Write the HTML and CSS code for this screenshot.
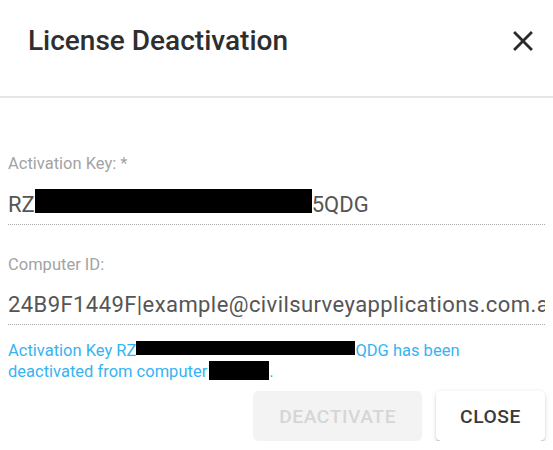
FILE: index.html
```html
<!DOCTYPE html>
<html lang="en">
<head>
<meta charset="utf-8">
<title>License Deactivation</title>
<link rel="stylesheet" href="styles.css">
</head>
<body>
<div class="dialog">
  <header class="dialog-header">
    <h1 class="dialog-title">License Deactivation</h1>
    <button class="icon-btn" aria-label="Close">
      <svg class="close-icon" viewBox="0 0 24 24" width="34" height="34"><path d="M19 6.41L17.59 5 12 10.59 6.41 5 5 6.41 10.59 12 5 17.59 6.41 19 12 13.41 17.59 19 19 17.59 13.41 12z" fill="#2b2b2b"/></svg>
    </button>
  </header>
  <div class="dialog-content">
    <div class="field">
      <label class="field-label">Activation Key: *</label>
      <div class="field-input">RZ<span class="redact redact-key"></span>5QDG</div>
    </div>
    <div class="field field-second">
      <label class="field-label">Computer ID:</label>
      <div class="field-input field-wide">24B9F1449F|example@civilsurveyapplications.com.au</div>
    </div>
    <p class="message">Activation Key RZ<span class="redact redact-msg1"></span>QDG has been<br>deactivated from computer <span class="redact redact-msg2"></span>.</p>
    <div class="actions">
      <button class="btn btn-disabled" disabled>Deactivate</button>
      <button class="btn btn-raised">Close</button>
    </div>
  </div>
</div>
</body>
</html>
```

FILE: styles.css
```css
* { box-sizing: border-box; }
html, body { margin: 0; padding: 0; background: #ffffff; }
body { font-family: Roboto, "Noto Sans", "Liberation Sans", sans-serif; }

.dialog { width: 553px; }

.dialog-header {
  display: flex;
  align-items: center;
  justify-content: space-between;
  height: 98px;
  padding: 25px 13px 39px 28px;
  border-bottom: 2px solid #e6e6e6;
}
.dialog-title {
  margin: 0;
  font-size: 28px;
  font-weight: 500;
  line-height: 32px;
  color: #2e2e2e;
}
.icon-btn {
  border: 0;
  background: transparent;
  padding: 0;
  margin: 0;
  width: 34px;
  height: 34px;
  display: flex;
}
.close-icon { display: block; }

.dialog-content { padding: 57px 8px 0 8px; }

.field { display: flex; flex-direction: column; }
.field-second { margin-top: 31px; }
.field-label {
  font-size: 16.5px;
  line-height: 18px;
  color: #a3a3a3;
  margin-bottom: 16px;
}
.field-input {
  font-size: 22px;
  line-height: 30px;
  color: #555555;
  padding-bottom: 4px;
  border-bottom: 1px dotted #a8a8a8;
  white-space: nowrap;
  overflow: hidden;
}
.field-wide { letter-spacing: 0.42px; }
.redact { display: inline-block; background: #000; }
.redact-key { width: 277px; height: 24px; vertical-align: -1px; }

.message {
  margin: 15px 0 0 0;
  font-size: 16.5px;
  line-height: 21px;
  color: #36b3f2;
}
.redact-msg1 { width: 219px; height: 14px; vertical-align: 1px; }
.redact-msg2 { width: 60px; height: 19px; vertical-align: -3px; margin-left: -2px; }

.actions {
  display: flex;
  justify-content: flex-end;
  gap: 14px;
  margin-top: 9px;
}
.btn {
  font-family: Roboto, "Noto Sans", "Liberation Sans", sans-serif;
  font-size: 19.25px;
  font-weight: 500;
  letter-spacing: 0.55px;
  text-transform: uppercase;
  height: 50px;
  padding: 0 24px;
  border: 0;
  border-radius: 5px;
}
.btn-disabled { background: #f3f3f3; color: #d6d6d6; padding: 0 26px; }
.btn-raised {
  background: #ffffff;
  color: #3a3a3a;
  box-shadow: 0 3px 1px -2px rgba(0,0,0,.2), 0 2px 2px 0 rgba(0,0,0,.14), 0 1px 5px 0 rgba(0,0,0,.12);
}
```
